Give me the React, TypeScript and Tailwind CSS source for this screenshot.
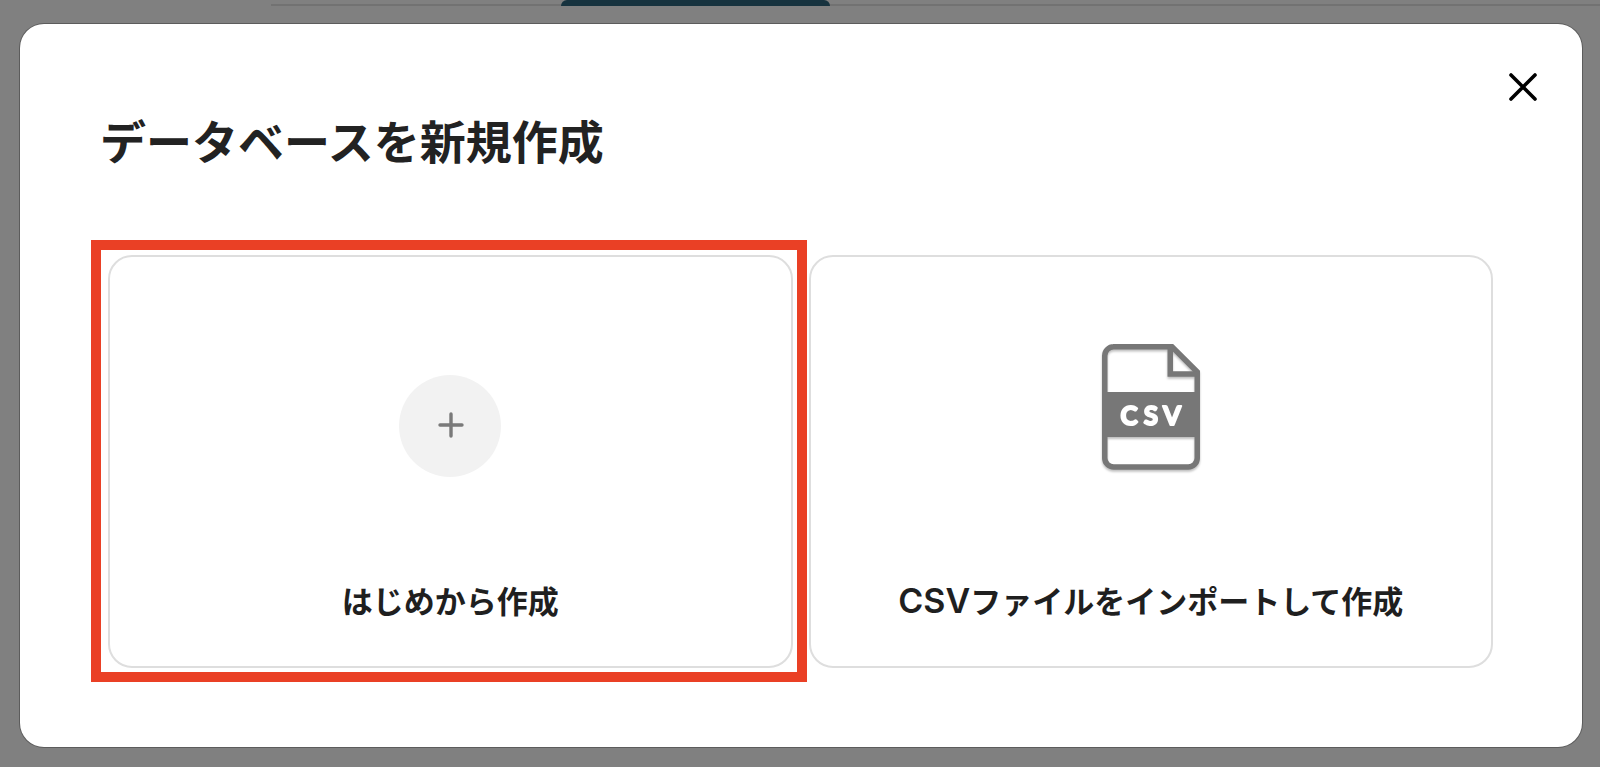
import type { ReactNode } from 'react';

function CloseIcon() {
  return (
    <svg width="32" height="32" viewBox="0 0 32 32" fill="none" aria-hidden="true">
      <path
        d="M4 4L28 28M28 4L4 28"
        stroke="#000"
        strokeWidth="3.6"
        strokeLinecap="round"
      />
    </svg>
  );
}

function PlusIcon() {
  return (
    <svg width="28" height="28" viewBox="0 0 28 28" fill="none" aria-hidden="true">
      <path
        d="M15 2V24M4 13H26"
        stroke="#7a7a7a"
        strokeWidth="3.4"
        strokeLinecap="round"
      />
    </svg>
  );
}

function CsvIcon() {
  return (
    <svg
      width="98"
      height="126"
      viewBox="0 0 98 126"
      className="overflow-visible drop-shadow-[0_2px_1px_rgba(0,0,0,0.25)]"
      aria-hidden="true"
    >
      <path
        d="M11 2.75H70L95.25 28V114A9 9 0 0 1 86.25 123H11.75A9 9 0 0 1 2.75 114V11.75A9 9 0 0 1 11.75 2.75Z"
        fill="none"
        stroke="#777"
        strokeWidth="5.5"
      />
      <path d="M68.25 3V30H95" fill="none" stroke="#777" strokeWidth="5.5" />
      <rect x="1" y="48" width="96" height="45" fill="#777" />
      <g
        textAnchor="middle"
        fill="#fff"
        stroke="#fff"
        strokeWidth="2"
        strokeLinejoin="round"
        className="font-['Lato',sans-serif] text-[26px] font-bold"
      >
        <text x="27" y="81">C</text>
        <text x="49" y="81">S</text>
        <text x="70" y="81">V</text>
      </g>
    </svg>
  );
}

type CreateCardProps = {
  label: ReactNode;
  children: ReactNode;
};

function CreateCard({ label, children }: CreateCardProps) {
  return (
    <button
      type="button"
      className="flex h-[413px] w-full flex-col items-center rounded-3xl border-2 border-[#dedede] bg-white pb-10"
    >
      {children}
      <span className="text-[31px] leading-12 font-semibold text-[#1f1f1f]">
        {label}
      </span>
    </button>
  );
}

export default function App() {
  return (
    <div className="min-h-screen bg-[#808080] pb-5 font-['Inter','Noto_Sans_CJK_JP',sans-serif]">
      {/* 背面のタブバー */}
      <div className="mb-[18px] ml-[271px] flex h-1.5 border-b-2 border-[#727272]">
        <div className="-mb-0.5 ml-[290px] w-[269px] rounded-t-md bg-[#17333f]" />
      </div>

      <div
        role="dialog"
        aria-labelledby="dialog-title"
        className="mr-[18px] ml-5 rounded-3xl bg-white pb-[79px] shadow-[0_0_0_1px_#5c5c5c]"
      >
        <header className="flex h-[231px] items-start justify-between pr-[43px] pl-20">
          <h2
            id="dialog-title"
            className="pt-[82px] text-[46px] leading-[72px] font-bold text-[#222]"
          >
            データベースを新規作成
          </h2>
          <button type="button" aria-label="閉じる" className="mt-[47px]">
            <CloseIcon />
          </button>
        </header>

        <div className="grid grid-cols-2 gap-4 pr-[89px] pl-[88px]">
          <div className="relative">
            <CreateCard label="はじめから作成">
              <span className="flex flex-1 items-center pt-4">
                <span className="flex size-[102px] items-center justify-center rounded-full bg-[#f2f2f2]">
                  <PlusIcon />
                </span>
              </span>
            </CreateCard>
            {/* 選択箇所の強調枠 */}
            <div className="pointer-events-none absolute -top-[15px] -right-3.5 -bottom-3.5 -left-[17px] border-[10px] border-[#ea4025]" />
          </div>
          <CreateCard
            label={
              <>
                <span className="text-[34px]">CSV</span>
                ファイルをインポートして作成
              </>
            }
          >
            <span className="flex flex-1 items-center pb-5">
              <CsvIcon />
            </span>
          </CreateCard>
        </div>
      </div>
    </div>
  );
}
